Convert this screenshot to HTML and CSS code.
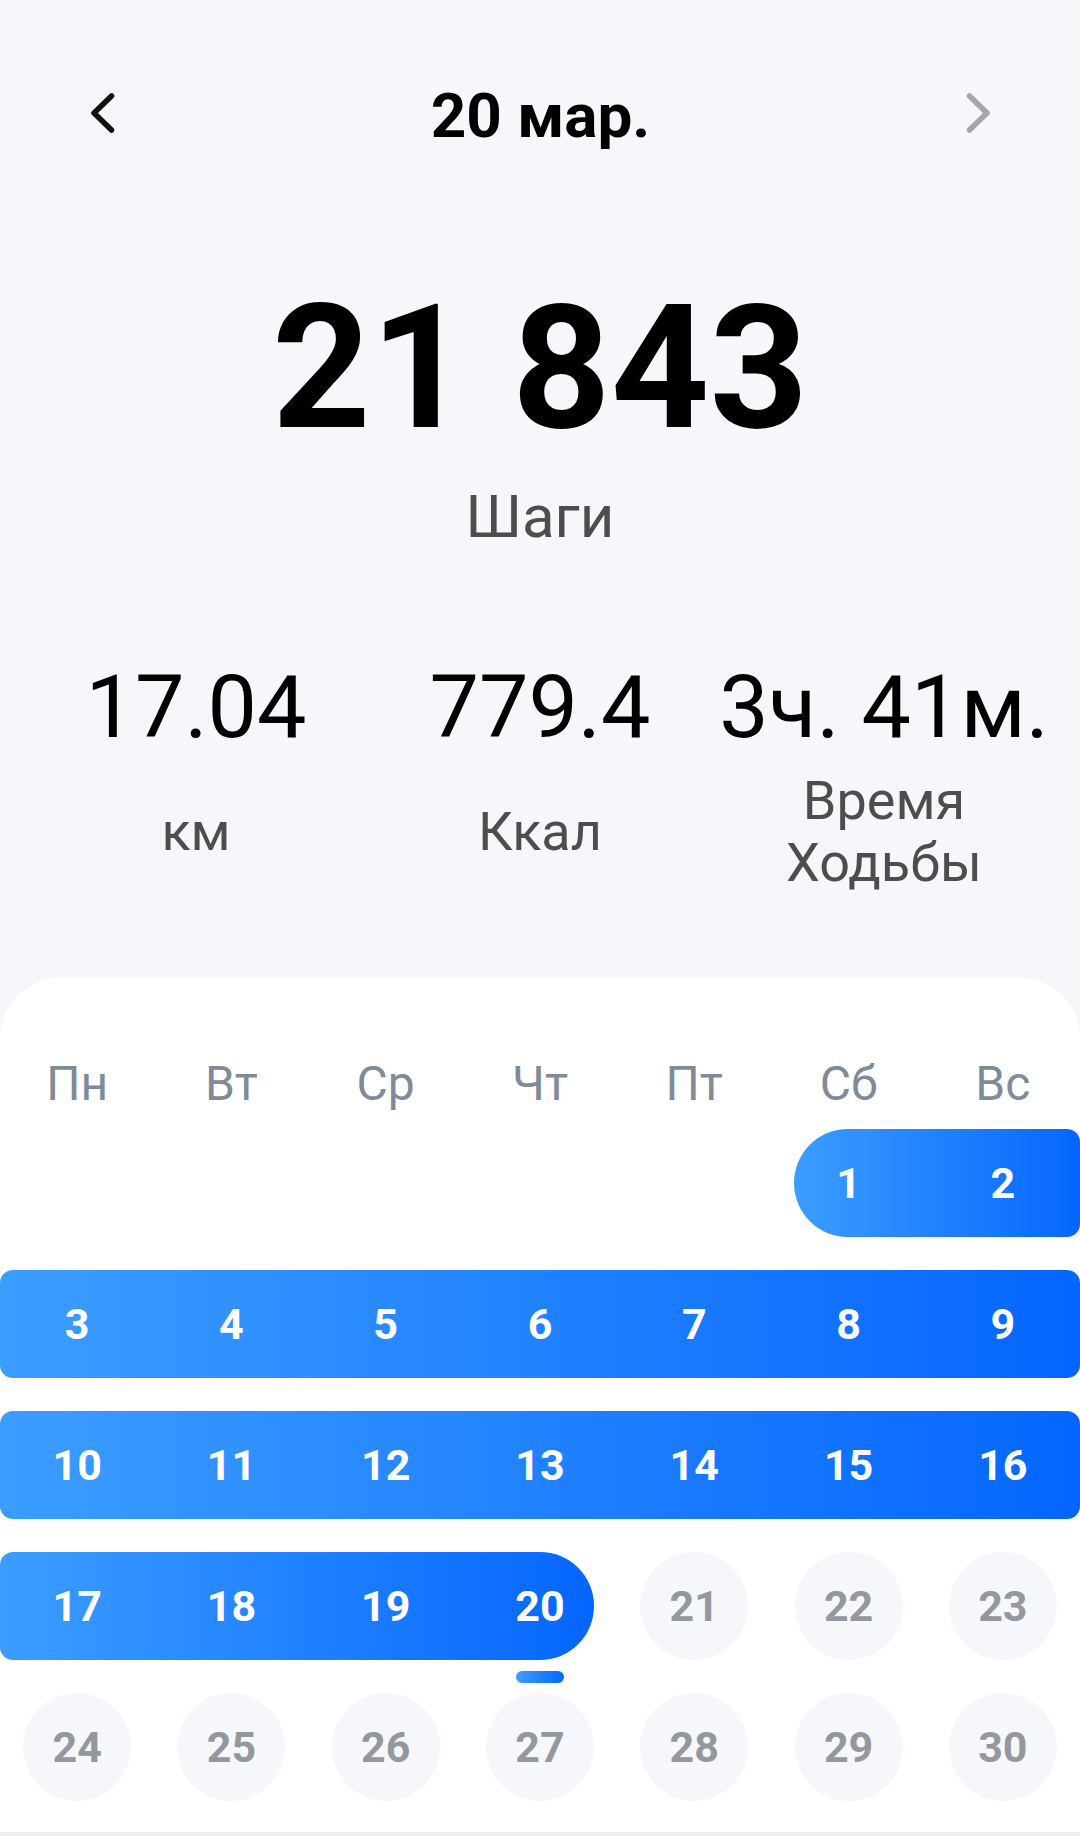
FILE: index.html
```html
<!DOCTYPE html>
<html lang="ru">
<head>
  <meta charset="utf-8">
  <title>Шаги</title>
  <link rel="stylesheet" href="styles.css">
</head>
<body>
  <div class="page">
    <!-- Date switcher -->
    <div class="topbar">
      <svg class="chev" viewBox="0 0 24 40" width="24" height="40"><polyline points="20.5,3 3,20 20.5,37" /></svg>
      <div class="date">20 мар.</div>
      <svg class="chev chev-off" viewBox="0 0 24 40" width="24" height="40"><polyline points="3.5,3 21,20 3.5,37" /></svg>
    </div>

    <!-- Totals -->
    <div class="steps">21 843</div>
    <div class="steps-label">Шаги</div>

    <div class="stats">
      <div class="stat">
        <div class="stat-value">17.04</div>
        <div class="stat-label">км</div>
      </div>
      <div class="stat">
        <div class="stat-value">779.4</div>
        <div class="stat-label">Ккал</div>
      </div>
      <div class="stat">
        <div class="stat-value">3ч. 41м.</div>
        <div class="stat-label">Время<br>Ходьбы</div>
      </div>
    </div>

    <!-- Month -->
    <div class="card">
      <div class="weekdays">
        <span>Пн</span><span>Вт</span><span>Ср</span><span>Чт</span><span>Пт</span><span>Сб</span><span>Вс</span>
      </div>

      <div class="weeks">
        <div class="week">
          <div class="band sat-sun"></div>
          <span class="day"></span><span class="day"></span><span class="day"></span><span class="day"></span><span class="day"></span>
          <span class="day on">1</span><span class="day on">2</span>
        </div>
        <div class="week">
          <div class="band full"></div>
          <span class="day on">3</span><span class="day on">4</span><span class="day on">5</span><span class="day on">6</span><span class="day on">7</span><span class="day on">8</span><span class="day on">9</span>
        </div>
        <div class="week">
          <div class="band full"></div>
          <span class="day on">10</span><span class="day on">11</span><span class="day on">12</span><span class="day on">13</span><span class="day on">14</span><span class="day on">15</span><span class="day on">16</span>
        </div>
        <div class="week">
          <div class="band mon-thu"></div>
          <span class="day on">17</span><span class="day on">18</span><span class="day on">19</span><span class="day on today">20</span>
          <span class="day later"><i>21</i></span><span class="day later"><i>22</i></span><span class="day later"><i>23</i></span>
        </div>
        <div class="week">
          <span class="day later"><i>24</i></span><span class="day later"><i>25</i></span><span class="day later"><i>26</i></span><span class="day later"><i>27</i></span><span class="day later"><i>28</i></span><span class="day later"><i>29</i></span><span class="day later"><i>30</i></span>
        </div>
      </div>
    </div>
    <div class="sysbar"></div>
  </div>
</body>
</html>
```

FILE: styles.css
```css
body { margin: 0; background: #f7f7fb; font-family: Roboto, "Noto Sans", sans-serif; color: #000; }
.page { width: 1080px; height: 1836px; display: flex; flex-direction: column; }

/* top bar */
.topbar { height: 226px; display: flex; align-items: center; justify-content: space-between; padding: 0 90px 0 91px; }
.chev { width: 24px; height: 40px; }
.chev polyline { fill: none; stroke: #111; stroke-width: 5.5; stroke-linecap: round; stroke-linejoin: round; }
.chev-off polyline { stroke: #a6a6aa; }
.date { font-size: 62px; font-weight: 700; line-height: 62px; margin-top: 5px; }

/* totals */
.steps { margin-top: 56px; font-size: 172px; font-weight: 700; line-height: 172px; text-align: center; }
.steps-label { margin-top: 33px; font-size: 60px; line-height: 60px; text-align: center; color: #4d4d4d; }

.stats { margin-top: 115px; padding: 0 24px; display: grid; grid-template-columns: repeat(3, 1fr); }
.stat { display: flex; flex-direction: column; align-items: center; }
.stat-value { font-size: 88px; line-height: 90px; white-space: nowrap; }
.stat-label { margin-top: 18px; height: 124px; display: flex; align-items: center; text-align: center; font-size: 54px; line-height: 62px; color: #4d4d4d; }

/* calendar card */
.card { margin-top: 84px; flex: 1; background: #fff; border-radius: 60px 60px 0 0; padding: 76px 0 31px; }
.weekdays { display: grid; grid-template-columns: repeat(7, 1fr); height: 60px; line-height: 60px; text-align: center; font-size: 48px; color: #7f8b9a; }
.weeks { margin-top: 15px; display: flex; flex-direction: column; gap: 33px; }
.week { display: grid; grid-template-columns: repeat(7, 1fr); height: 108px; }
.week > * { grid-row: 1; }

.band { background: linear-gradient(90deg, #3c9dff, #0566ff); border-radius: 13px; }
.band.full { grid-column: 1 / 8; }
.band.sat-sun { grid-column: 6 / 8; margin-left: 23px; border-radius: 54px 13px 13px 54px; }
.band.mon-thu { grid-column: 1 / 5; margin-right: 23px; border-radius: 13px 54px 54px 13px; }

.day { display: flex; align-items: center; justify-content: center; font-size: 43px; font-weight: 700; color: #fff; }
.day:nth-of-type(1) { grid-column: 1; }
.day:nth-of-type(2) { grid-column: 2; }
.day:nth-of-type(3) { grid-column: 3; }
.day:nth-of-type(4) { grid-column: 4; }
.day:nth-of-type(5) { grid-column: 5; }
.day:nth-of-type(6) { grid-column: 6; }
.day:nth-of-type(7) { grid-column: 7; }
.day.later i { font-style: normal; width: 108px; height: 108px; border-radius: 50%; background: #f6f7fa; color: #93979f; display: flex; align-items: center; justify-content: center; }
.day.today { position: relative; }
.day.today::after { content: ""; position: absolute; left: 50%; bottom: -23px; width: 48px; height: 12px; margin-left: -24px; border-radius: 6px; background: linear-gradient(90deg, #3c9dff, #0566ff); }

.sysbar { height: 4px; background: #eceef5; }
```
